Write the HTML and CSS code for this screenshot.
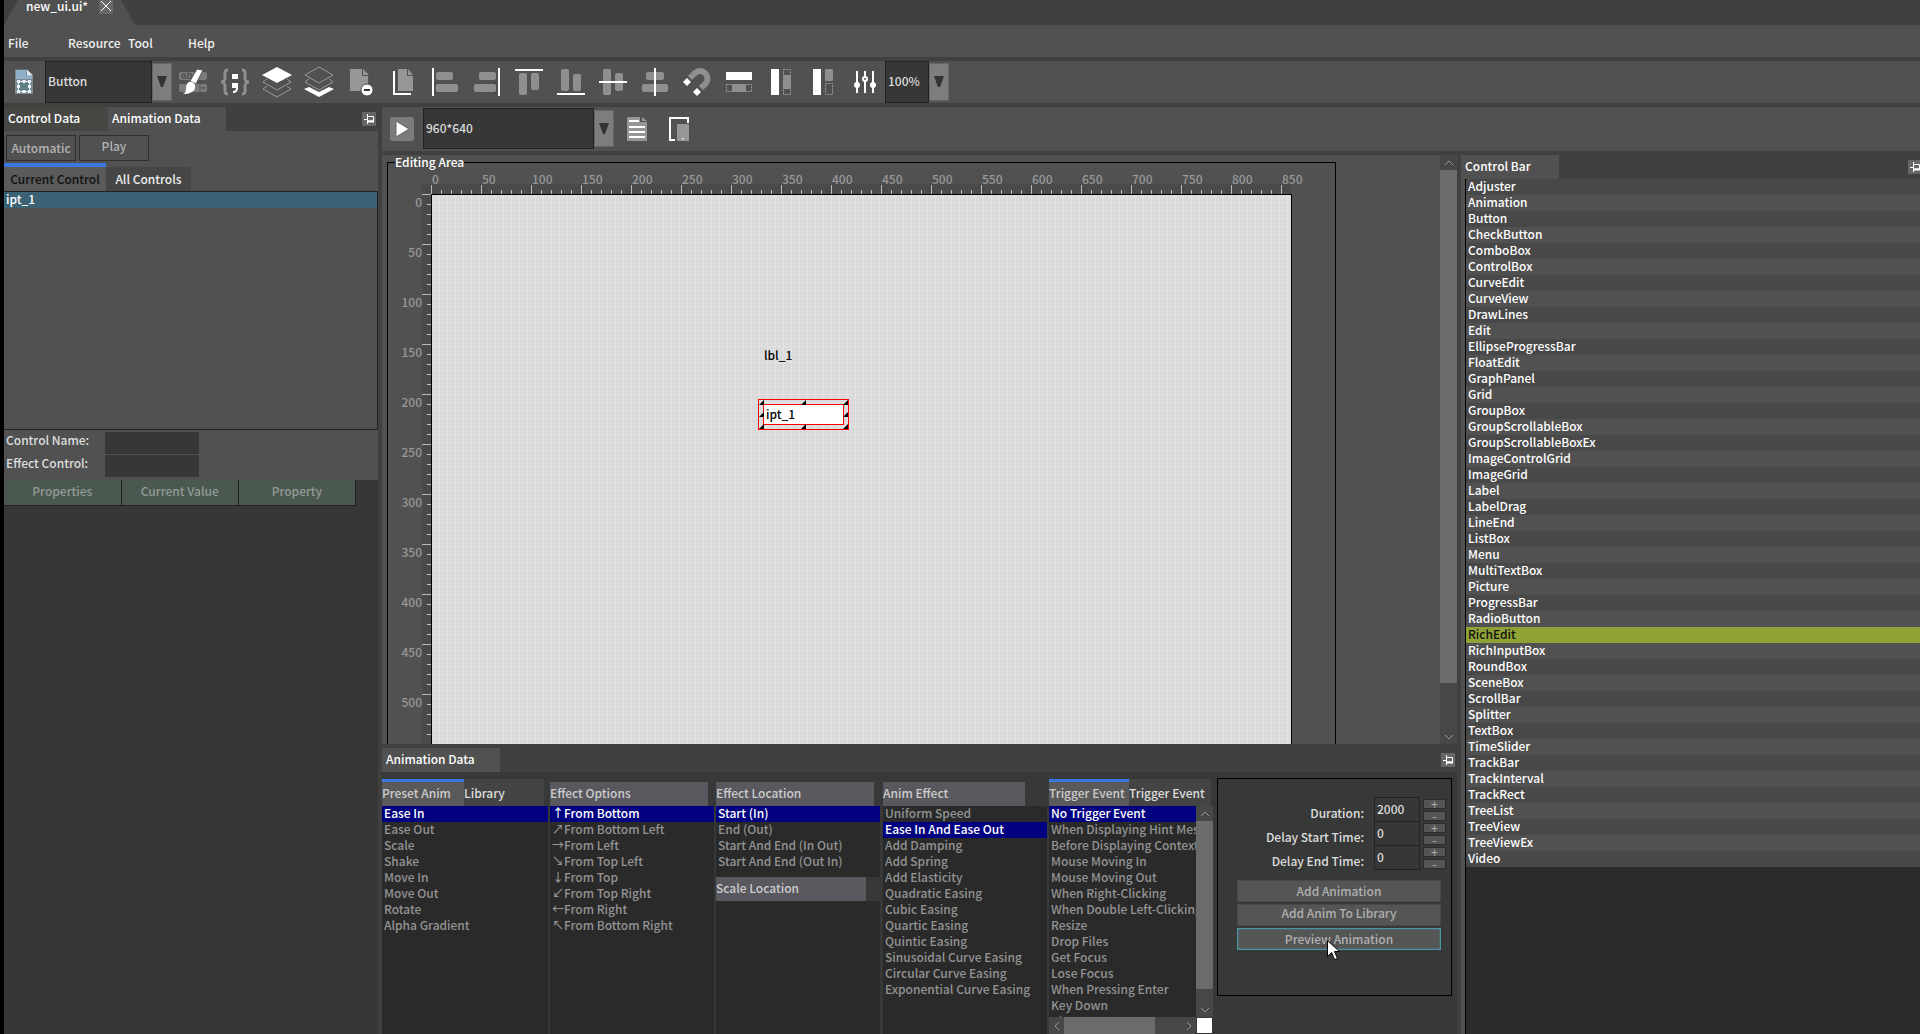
FILE: index.html
```html
<!DOCTYPE html>
<html lang="en">
<head>
<meta charset="utf-8">
<title>new_ui.ui*</title>
<link rel="stylesheet" href="styles.css">
</head>
<body>
<svg class="defs" aria-hidden="true">
  <symbol id="pin" viewBox="0 0 14 14"><path d="M2 7.500h4M5.500 2v10" fill="none" stroke="#fff" stroke-width="1"/><path d="M6 4.500h5.500V9H6" fill="none" stroke="#fff" stroke-width="1"/><path d="M6 8.500h6v2H6z" fill="#fff"/></symbol>
  <symbol id="up" viewBox="0 0 10 6"><path d="M1 5l4-4 4 4" fill="none" stroke="#999" stroke-width="1"/></symbol>
  <symbol id="down" viewBox="0 0 10 6"><path d="M1 1l4 4 4-4" fill="none" stroke="#999" stroke-width="1"/></symbol>
  <symbol id="left" viewBox="0 0 6 10"><path d="M5 1L1 5l4 4" fill="none" stroke="#999" stroke-width="1"/></symbol>
  <symbol id="right" viewBox="0 0 6 10"><path d="M1 1l4 4-4 4" fill="none" stroke="#999" stroke-width="1"/></symbol>
  <symbol id="drop" viewBox="0 0 10 12"><path d="M0 0h10L6 11H4z" fill="#333"/></symbol>
</svg>
<div class="app">
  <header class="titlebar">
    <div class="filetab"><span>new_ui.ui*</span><button class="close" aria-label="Close"><svg width="14" height="14" viewBox="0 0 14 14"><path d="M2 1l10 10M12 1L2 11" stroke="#fff" stroke-width="1" fill="none"/></svg></button></div>
  </header>
  <nav class="menubar"><button>File</button><button>Resource</button><button>Tool</button><button>Help</button></nav>
  <div class="toolbar">
    <button class="tool first" aria-label="Form"><svg width="32" height="32"><path d="M8 3.500h12l6 6V28H8z" fill="#7a8b93"/><path d="M9 4h10v6h6v3H9z" fill="#8fb0c6"/><path d="M20 3.500v6h6z" fill="#dfe9ef"/><path d="M11.500 15.500h11v10h-11z" fill="#5f7f86" stroke="#e8f2f4" stroke-width="1"/><path d="M10 14h3v3h-3zM15.500 14h3v3h-3zM21 14h3v3h-3zM10 19h3v3h-3zM21 19h3v3h-3zM10 24h3v3h-3zM15.500 24h3v3h-3zM21 24h3v3h-3z" fill="#e8f2f4"/></svg></button>
    <div class="combo kind"><select aria-label="Control type"><option>Button</option></select><span class="droparrow"><svg width="10" height="12"><use href="#drop"/></svg></span></div>
    <button class="tool" aria-label="Style"><svg width="32" height="32"><rect x="2" y="6" width="28" height="8" rx="2" fill="#7c7c7a"/><rect x="2" y="18" width="28" height="8" rx="2" fill="#7c7c7a"/><path d="M23 18v8" stroke="#515151"/><path d="M24.500 21h4l-2 3z" fill="#515151"/><text x="4" y="13" class="abtext">ab</text><path d="M20 3l6 1-7 14-6-3z" fill="#fff" stroke="#515151" stroke-width="1"/><path d="M12 16c4-1 7 2 6 6-1 4-6 6-12 6 2-1 3-2 3-5 0-4 1-6 3-7z" fill="#fff"/></svg></button>
    <button class="tool" aria-label="Code"><svg width="32" height="32"><path d="M9 4C5 4 6 7 6 11s-1 5-4 5c3 0 4 1 4 5s-1 7 3 7M23 4c4 0 3 3 3 7s1 5 4 5c-3 0-4 1-4 5s1 7-3 7" fill="none" stroke="#8f8f8d" stroke-width="3"/><path d="M13 8h6v5h-6zM13 17h6v5c0 3-2 5-5 5v-2c2 0 3-1 3-3h-4z" fill="#fff"/></svg></button>
    <button class="tool" aria-label="Bring to front"><svg width="32" height="32"><path d="M6 13l-4 3 14 8 14-8-4-3M6 20l-4 3 14 8 14-8-4-3" fill="none" stroke="#999" stroke-width="1"/><path d="M16 1l15 8-15 8L1 9z" fill="#fff"/></svg></button>
    <button class="tool" aria-label="Send to back"><svg width="32" height="32"><path d="M16 1l14 8-14 8L2 9zM6 13l-4 3 14 8 14-8-4-3" fill="none" stroke="#999" stroke-width="1"/><path d="M1 23l5-2 10 5 10-5 5 2-15 8z" fill="#fff"/></svg></button>
    <button class="tool" aria-label="Remove page"><svg width="32" height="32"><path d="M5 3h12v7h6v15H5z" fill="#969694"/><path d="M18 3l6 6h-6z" fill="#969694"/><circle cx="22" cy="24" r="6" fill="#fff" stroke="#515151"/><path d="M19 24h6" stroke="#333" stroke-width="2"/></svg></button>
    <button class="tool" aria-label="Copy page"><svg width="32" height="32"><path d="M11 3h9v7h6v15H11z" fill="#969694"/><path d="M21 3l5 6h-5z" fill="#969694"/><path d="M7 5v23h17" fill="none" stroke="#fff" stroke-width="2"/></svg></button>
    <button class="tool" aria-label="Align left"><svg width="32" height="32"><rect x="7" y="6" width="17" height="8" rx="2" fill="#8f8f8d"/><rect x="7" y="18" width="22" height="8" rx="2" fill="#8f8f8d"/><rect x="3" y="2" width="2" height="28" fill="#fff"/></svg></button>
    <button class="tool" aria-label="Align right"><svg width="32" height="32"><rect x="8" y="6" width="17" height="8" rx="2" fill="#8f8f8d"/><rect x="3" y="18" width="22" height="8" rx="2" fill="#8f8f8d"/><rect x="27" y="2" width="2" height="28" fill="#fff"/></svg></button>
    <button class="tool" aria-label="Align top"><svg width="32" height="32"><rect x="6" y="7" width="8" height="22" rx="2" fill="#8f8f8d"/><rect x="18" y="7" width="8" height="17" rx="2" fill="#8f8f8d"/><rect x="2" y="3" width="28" height="2" fill="#fff"/></svg></button>
    <button class="tool" aria-label="Align bottom"><svg width="32" height="32"><rect x="6" y="3" width="8" height="22" rx="2" fill="#8f8f8d"/><rect x="18" y="8" width="8" height="17" rx="2" fill="#8f8f8d"/><rect x="2" y="27" width="28" height="2" fill="#fff"/></svg></button>
    <button class="tool" aria-label="Align middle"><svg width="32" height="32"><rect x="6" y="3" width="8" height="26" rx="2" fill="#8f8f8d"/><rect x="18" y="7" width="8" height="18" rx="2" fill="#8f8f8d"/><rect x="2" y="15" width="28" height="2" fill="#fff"/></svg></button>
    <button class="tool" aria-label="Align centre"><svg width="32" height="32"><rect x="7" y="6" width="18" height="8" rx="2" fill="#8f8f8d"/><rect x="3" y="18" width="26" height="8" rx="2" fill="#8f8f8d"/><rect x="15" y="2" width="2" height="28" fill="#fff"/></svg></button>
    <button class="tool" aria-label="Snap"><svg width="32" height="32"><path d="M9 12l5-5c7-6 16 3 11 10l-5 5" fill="none" stroke="#8f8f8d" stroke-width="6"/><path d="M6 12l4 4-4 4-4-4zM16 22l4 4-4 4-4-4z" fill="#fff"/></svg></button>
    <button class="tool" aria-label="Same width"><svg width="32" height="32"><rect x="3" y="6" width="26" height="8" fill="#fff"/><rect x="3.500" y="18.500" width="25" height="7" fill="none" stroke="#999" stroke-dasharray="2 1"/><rect x="9" y="18" width="14" height="8" fill="#8f8f8d"/></svg></button>
    <button class="tool" aria-label="Same height"><svg width="32" height="32"><rect x="6" y="3" width="8" height="26" fill="#fff"/><rect x="18.500" y="3.500" width="7" height="25" fill="none" stroke="#999" stroke-dasharray="2 1"/><rect x="18" y="9" width="8" height="14" fill="#8f8f8d"/></svg></button>
    <button class="tool" aria-label="Same size"><svg width="32" height="32"><rect x="6" y="3" width="8" height="26" fill="#fff"/><rect x="18.500" y="17.500" width="7" height="11" fill="none" stroke="#999" stroke-dasharray="2 1"/><rect x="18" y="3" width="8" height="12" rx="1" fill="#8f8f8d"/></svg></button>
    <button class="tool" aria-label="Settings"><svg width="32" height="32"><path d="M8 5v22M16 5v22M24 5v22" stroke="#fff" stroke-width="2"/><circle cx="8" cy="19" r="3" fill="#fff"/><circle cx="24" cy="19" r="3" fill="#fff"/><circle cx="16" cy="13" r="2" fill="#515151" stroke="#fff" stroke-width="2"/></svg></button>
    <div class="combo zoom"><select aria-label="Zoom"><option>100%</option></select><span class="droparrow"><svg width="10" height="12"><use href="#drop"/></svg></span></div>
  </div>
  <div class="workspace">
    <aside class="side">
      <div class="panelhead"><button class="ptab dim">Control Data</button><button class="ptab wide">Animation Data</button><button class="pin" aria-label="Pin panel"><svg width="14" height="14"><use href="#pin"/></svg></button></div>
      <div class="modes"><button class="low">Automatic</button><button>Play</button></div>
      <div class="subtabs"><button class="sub on">Current Control</button><button class="sub">All Controls</button></div>
      <ul class="controls"><li>ipt_1</li></ul>
      <div class="names">
        <label for="cname">Control Name:</label><input id="cname" type="text">
        <label for="ename">Effect Control:</label><input id="ename" type="text">
      </div>
      <div class="props"><table><thead><tr><th>Properties</th><th>Current Value</th><th>Property</th></tr></thead></table></div>
    </aside>
    <main class="main">
      <div class="stagebar">
        <button class="tool play" aria-label="Run"><svg width="32" height="32"><rect x="4" y="4" width="24" height="24" rx="2" fill="#7d7b7b"/><path d="M10 8l13 8-13 8z" fill="#fff" stroke="#6a6862"/></svg></button>
        <div class="combo res"><select aria-label="Resolution"><option>960*640</option></select><span class="droparrow"><svg width="10" height="12"><use href="#drop"/></svg></span></div>
        <button class="tool" aria-label="Script"><svg width="32" height="32"><path d="M6 4h13v5h7v19H6z" fill="#969694"/><path d="M21 4l5 4h-5z" fill="#969694"/><path d="M8 8h10M8 14h16M8 19h16M8 24h16" stroke="#fff" stroke-width="2"/></svg></button>
        <button class="tool" aria-label="Device"><svg width="32" height="32"><path d="M12 27H7V5h18v5" fill="none" stroke="#fff" stroke-width="2"/><rect x="14" y="11" width="12" height="17" rx="1" fill="#969694"/><path d="M19 26h2" stroke="#fff"/></svg></button>
      </div>
      <div class="centre">
        <section class="stage">
          <fieldset>
            <legend>Editing Area</legend>
            <div class="hruler"><span>0</span><span>50</span><span>100</span><span>150</span><span>200</span><span>250</span><span>300</span><span>350</span><span>400</span><span>450</span><span>500</span><span>550</span><span>600</span><span>650</span><span>700</span><span>750</span><span>800</span><span>850</span></div>
            <div class="board">
              <div class="vruler"><span>0</span><span>50</span><span>100</span><span>150</span><span>200</span><span>250</span><span>300</span><span>350</span><span>400</span><span>450</span><span>500</span></div>
              <div class="canvas">
                <span class="lbl">lbl_1</span>
                <div class="selected"><input type="text" value="ipt_1" aria-label="ipt_1"><i class="t l"></i><i class="t c"></i><i class="t r"></i><i class="m l"></i><i class="m r"></i><i class="b l"></i><i class="b c"></i><i class="b r"></i></div>
              </div>
            </div>
          </fieldset>
          <div class="vscroll"><span class="arrow"><svg width="10" height="6"><use href="#up"/></svg></span><span class="thumb stagethumb"></span><span class="rest"></span><span class="arrow"><svg width="10" height="6"><use href="#down"/></svg></span></div>
        </section>
        <section class="anim">
          <div class="panelhead"><button class="ptab wide">Animation Data</button><button class="pin" aria-label="Pin panel"><svg width="14" height="14"><use href="#pin"/></svg></button></div>
          <div class="animbody">
            <div class="col">
              <div class="coltabs"><button class="ctab preset on">Preset Anim</button><button class="ctab library">Library</button></div>
              <ul class="list"><li class="sel">Ease In</li><li>Ease Out</li><li>Scale</li><li>Shake</li><li>Move In</li><li>Move Out</li><li>Rotate</li><li>Alpha Gradient</li></ul>
            </div>
            <div class="col">
              <h3 class="colhead">Effect Options</h3>
              <ul class="list dirs"><li class="sel"><b>↑</b>From Bottom</li><li><b>↗</b>From Bottom Left</li><li><b>→</b>From Left</li><li><b>↘</b>From Top Left</li><li><b>↓</b>From Top</li><li><b>↙</b>From Top Right</li><li><b>←</b>From Right</li><li><b>↖</b>From Bottom Right</li></ul>
            </div>
            <div class="col">
              <h3 class="colhead">Effect Location</h3>
              <ul class="list short"><li class="sel">Start (In)</li><li>End (Out)</li><li>Start And End (In Out)</li><li>Start And End (Out In)</li></ul>
              <h3 class="colhead scale">Scale Location</h3>
              <ul class="list"></ul>
            </div>
            <div class="col">
              <h3 class="colhead effect">Anim Effect</h3>
              <ul class="list"><li>Uniform Speed</li><li class="sel">Ease In And Ease Out</li><li>Add Damping</li><li>Add Spring</li><li>Add Elasticity</li><li>Quadratic Easing</li><li>Cubic Easing</li><li>Quartic Easing</li><li>Quintic Easing</li><li>Sinusoidal Curve Easing</li><li>Circular Curve Easing</li><li>Exponential Curve Easing</li></ul>
            </div>
            <div class="col">
              <div class="coltabs"><button class="ctab on">Trigger Event</button><button class="ctab">Trigger Event</button></div>
              <div class="scroller">
                <ul class="list"><li class="sel">No Trigger Event</li><li>When Displaying Hint Message</li><li>Before Displaying Context Menu</li><li>Mouse Moving In</li><li>Mouse Moving Out</li><li>When Right-Clicking</li><li>When Double Left-Clicking</li><li>Resize</li><li>Drop Files</li><li>Get Focus</li><li>Lose Focus</li><li>When Pressing Enter</li><li>Key Down</li><li>Char Input</li></ul>
                <div class="vscroll"><span class="arrow"><svg width="10" height="6"><use href="#up"/></svg></span><span class="thumb listthumb"></span><span class="rest"></span><span class="arrow"><svg width="10" height="6"><use href="#down"/></svg></span></div>
                <div class="hscroll"><span class="arrow"><svg width="6" height="10"><use href="#left"/></svg></span><span class="thumb"></span><span class="rest"></span><span class="arrow"><svg width="6" height="10"><use href="#right"/></svg></span></div>
                <span class="corner"></span>
              </div>
            </div>
            <form class="timing">
              <div class="fields">
                <label for="dur">Duration:</label><input id="dur" type="text" value="2000"><span class="spin"><button type="button">+</button><button type="button">-</button></span>
                <label for="ds">Delay Start Time:</label><input id="ds" type="text" value="0"><span class="spin"><button type="button">+</button><button type="button">-</button></span>
                <label for="de">Delay End Time:</label><input id="de" type="text" value="0"><span class="spin"><button type="button">+</button><button type="button">-</button></span>
              </div>
              <div class="actions">
                <button type="button">Add Animation</button>
                <button type="button" class="library">Add Anim To Library</button>
                <button type="button" class="focus">Preview Animation</button>
                <svg class="cursor" width="13" height="21" viewBox="0 0 13 21"><path d="M.5.500v16l4-4 3 7 3-1-3-7h5z" fill="#fff" stroke="#000"/></svg>
              </div>
            </form>
          </div>
        </section>
      </div>
      <aside class="bar">
        <div class="panelhead"><button class="ptab cbar">Control Bar</button><button class="pin" aria-label="Pin panel"><svg width="14" height="14"><use href="#pin"/></svg></button></div>
        <ul class="kinds"><li>Adjuster</li><li>Animation</li><li>Button</li><li>CheckButton</li><li>ComboBox</li><li>ControlBox</li><li>CurveEdit</li><li>CurveView</li><li>DrawLines</li><li>Edit</li><li>EllipseProgressBar</li><li>FloatEdit</li><li>GraphPanel</li><li>Grid</li><li>GroupBox</li><li>GroupScrollableBox</li><li>GroupScrollableBoxEx</li><li>ImageControlGrid</li><li>ImageGrid</li><li>Label</li><li>LabelDrag</li><li>LineEnd</li><li>ListBox</li><li>Menu</li><li>MultiTextBox</li><li>Picture</li><li>ProgressBar</li><li>RadioButton</li><li class="picked">RichEdit</li><li>RichInputBox</li><li>RoundBox</li><li>SceneBox</li><li>ScrollBar</li><li>Splitter</li><li>TextBox</li><li>TimeSlider</li><li>TrackBar</li><li>TrackInterval</li><li>TrackRect</li><li>TreeList</li><li>TreeView</li><li>TreeViewEx</li><li>Video</li></ul>
      </aside>
    </main>
  </div>
</div>
</body>
</html>
```
FILE: styles.css
```css
* { box-sizing: border-box; }
body { margin: 0; background: #000; color: #fff; font: 500 12px/16px "Noto Sans CJK SC", sans-serif; }
button, input, select { font: inherit; color: inherit; background: none; border: 0; border-radius: 0; padding: 0; margin: 0; outline: 0; }
button { white-space: nowrap; }
select { appearance: none; }
ul, h3 { margin: 0; padding: 0; list-style: none; font: inherit; }
li { height: 16px; line-height: 14px; white-space: nowrap; }
svg { display: block; flex: none; }
.defs { position: absolute; width: 0; height: 0; }

.app { height: 100vh; margin-left: 4px; background: #404040; display: flex; flex-direction: column; overflow: hidden; }
.titlebar { flex: none; height: 25px; display: flex; }
.filetab { width: 131px; padding: 0 22px; background: #515151; clip-path: polygon(14px 0, 117px 0, 100% 100%, 0 100%); display: flex; justify-content: space-between; align-items: flex-start; line-height: 12px; }
.close { width: 14px; height: 14px; background: #686868; }
.menubar { flex: none; height: 32px; background: #515151; padding: 4px 0 0 4px; display: flex; color: #eee; }
.menubar button { width: 60px; text-align: left; }
.toolbar { flex: none; height: 42px; margin: 4px 0; background: #515151; display: flex; align-items: stretch; }
.tool { width: 42px; display: flex; align-items: center; justify-content: center; }
.tool.first { width: 41px; padding-right: 4px; }
.abtext { font: bold 10px "Liberation Sans", sans-serif; fill: #515151; }
.combo { display: flex; color: #ddd; }
.combo select { flex: 1; min-width: 0; background: #373737; border: 1px solid #222; padding: 0 0 2px 2px; }
.droparrow { width: 20px; margin: 2px 0; background: #7e7d7b; border: 1px solid #666; display: flex; align-items: center; justify-content: center; }
.kind { width: 127px; }
.zoom { width: 64px; margin-left: -1px; }

.workspace { flex: 1; min-height: 0; display: grid; grid-template-columns: 374px 1fr; gap: 4px; }
.panelhead { flex: none; height: 24px; display: flex; align-items: center; }
.ptab { height: 24px; padding: 0 4px 2px; text-align: left; background: #515151; width: 98px; }
.ptab.dim { width: 104px; background: #464643; }
.ptab.wide { width: 118px; }
.pin { width: 14px; height: 14px; margin: 0 2px 0 auto; background: #666; }

.side { background: #515151; display: flex; flex-direction: column; min-height: 0; }
.side .panelhead { background: #404040; }
.modes { display: flex; gap: 3px; padding: 4px 2px 2px; }
.modes button { width: 70px; height: 26px; border: 1px solid #303030; color: #b4b4b4; padding-bottom: 4px; }
.modes .low { padding: 0; }
.subtabs { display: flex; height: 28px; }
.sub { background: #464646; width: 85px; color: #eee; border-top: 4px solid #515151; }
.sub.on { width: 102px; background: #5a5a5a; color: #111; border-color: #3a78e0; }
.controls { height: 239px; border: solid #222; border-width: 1px 1px 1px 0; }
.controls li { background: #3b6274; padding-left: 2px; }
.names { display: grid; grid-template-columns: 99px 94px; gap: 1px 0; padding: 2px 2px 3px; color: #ddd; }
.names input { height: 22px; background: #373737; }
.props { flex: 1; background: #373737; }
.props table { border-collapse: collapse; table-layout: fixed; width: 352px; }
.props th { height: 25px; padding: 0 0 2px; font-weight: 500; color: #929b96; background: #4a5850; border: solid #222; border-width: 0 1px 1px 0; }

.main { display: grid; grid-template-columns: 1fr 459px; grid-template-rows: 44px 1fr; gap: 4px; min-width: 0; min-height: 0; }
.stagebar { grid-column: 1 / -1; background: #515151; display: flex; }
.play { width: 41px; padding-right: 1px; }
.res { width: 191px; margin-right: 2px; padding: 1px 0 2px; }
.centre { min-width: 0; min-height: 0; display: flex; flex-direction: column; gap: 4px; }
.stage { flex: 1; min-height: 0; overflow: hidden; background: #515151; display: flex; justify-content: space-between; }
fieldset { margin: 0 0 0 5px; padding: 0; border: 1px solid #000; border-bottom: 0; width: 949px; min-height: 0; }
legend { margin-left: 7px; padding: 0; line-height: 14px; }
.hruler { height: 25px; margin-left: 34px; padding: 2px 0 0 10px; display: flex; width: 869px; color: #999; background: repeating-linear-gradient(90deg, #bbb 0 1px, transparent 1px 50px) 9px 16px / 860px 9px no-repeat, repeating-linear-gradient(90deg, #bbb 0 1px, transparent 1px 10px) 9px 21px / 860px 4px no-repeat, linear-gradient(#4a4a4a, #4a4a4a) 0 15px / 100% 10px no-repeat; }
.hruler span { flex: none; width: 50px; }
.board { display: flex; }
.vruler { width: 43px; padding-right: 9px; text-align: right; color: #999; background: repeating-linear-gradient(#bbb 0 1px, transparent 1px 50px) 34px 0 / 9px 100% no-repeat, repeating-linear-gradient(#bbb 0 1px, transparent 1px 10px) 39px 0 / 4px 100% no-repeat, linear-gradient(#4a4a4a, #4a4a4a) 34px 0 / 9px 100% no-repeat; }
.vruler span { display: block; height: 50px; }
.canvas { position: relative; width: 861px; height: 640px; border: 1px solid #000; background: linear-gradient(#e3e3e3 1px, transparent 1px) 0 7px / 8px 8px, linear-gradient(90deg, #e3e3e3 1px, transparent 1px) 7px 0 / 8px 8px, #dadada; color: #000; }
.lbl { position: absolute; left: 332px; top: 152px; }
.selected { position: absolute; left: 326px; top: 204px; width: 91px; height: 31px; border: 1px solid red; padding: 4px; }
.selected input { width: 81px; height: 21px; border: 1px solid red; background: #fff; padding: 0 0 2px 2px; display: block; }
.selected i { position: absolute; width: 5px; height: 5px; background: #000; clip-path: polygon(100% 0, 100% 100%, 0 100%); }
.selected .t { top: 0; } .selected .m { top: 12px; } .selected .b { bottom: 0; }
.selected .l { left: 0; } .selected .c { left: 42px; } .selected .r { right: 0; }

.vscroll { width: 17px; background: #474747; display: flex; flex-direction: column; }
.hscroll { background: #474747; display: flex; }
.arrow { flex: none; width: 15px; height: 15px; display: flex; align-items: center; justify-content: center; }
.vscroll .arrow { width: 17px; }
.hscroll .arrow { height: 17px; }
.thumb { flex: 91; background: #6b6b69; }
.rest { flex: 26; }
.vscroll .stagethumb { flex: 290; }
.vscroll .listthumb { flex: 350; }
.listthumb + .rest { flex: 26; }

.anim { flex: none; height: 286px; background: #373938; display: flex; flex-direction: column; }
.anim .panelhead { background: #404040; }
.animbody { flex: 1; min-height: 0; display: grid; grid-template-columns: 166px 164px 165px 164px 164px 1fr; gap: 2px; padding-right: 5px; }
.animbody .col:nth-child(3) { margin-right: 1px; }
.col { min-width: 0; min-height: 0; padding-top: 7px; display: flex; flex-direction: column; }
.coltabs { display: flex; height: 27px; color: #ddd; }
.ctab { width: 82px; background: #444; text-align: left; border-top: 3px solid #444; padding-bottom: 2px; }
.ctab.on { background: #5a5a5a; border-color: #3a78e0; color: #ccc; width: 80px; }
.ctab.preset { width: 82px; }
.ctab.library { width: 80px; }
.colhead { flex: none; height: 24px; line-height: 22px; margin-top: 3px; width: 158px; background: #59585e; color: #ccc; }
.colhead.scale { width: 150px; margin-top: 0; }
.colhead.effect { width: 142px; }
.list { flex: 1; min-height: 0; background: #2a2a2a; color: #939393; overflow: hidden; }
.list li { padding-left: 2px; }
.list .sel { background: #000080; color: #fff; }
.list.short { flex: none; height: 71px; }
.list b { display: inline-block; width: 12px; font-weight: 500; text-align: center; }
.scroller { flex: 1; min-height: 0; display: grid; grid-template-columns: 147px 17px; grid-template-rows: 1fr 17px; }
.corner { background: #fff; margin: 1px; }
.timing { margin: 6px 0 38px 2px; padding-top: 18px; border: 1px solid #000; color: #ddd; }
.fields { display: grid; grid-template-columns: 1fr 46px 23px; grid-auto-rows: 24px; column-gap: 3px; padding-right: 5px; }
.fields label { text-align: right; padding: 8px 7px 0 0; }
.fields input { width: 46px; height: 25px; background: #373737; border: 1px solid #222; padding: 0 0 2px 2px; }
.spin { display: flex; flex-direction: column; gap: 2px; padding-top: 2px; }
.spin button { height: 10px; line-height: 8px; background: #555; border: 1px solid #2c2c2c; color: #aaa; }
.actions { position: relative; display: grid; gap: 2px; grid-auto-rows: 22px; margin: 11px 10px 0 19px; }
.actions button { background: #555; color: #b0b0b0; border: 1px solid #484848; }
.actions .library { padding-bottom: 4px; }
.actions .focus { border-color: #4a94a4; box-shadow: inset 0 0 2px #4a94a4; }
.cursor { position: absolute; left: 90px; top: 60px; }

.bar { background: #515151; display: flex; flex-direction: column; min-height: 0; }
.bar .panelhead { background: #404040; }
.bar .pin { margin-right: -2px; }
.kinds { flex: 1; min-height: 0; margin-left: 4px; border-left: 1px solid #000; background: #2a2a2a; overflow: hidden; }
.kinds li { padding-left: 2px; background: #515151; }
.kinds li:nth-child(odd) { background: #484848; }
.kinds li.picked { background: #8fa236; color: #111; }
```
